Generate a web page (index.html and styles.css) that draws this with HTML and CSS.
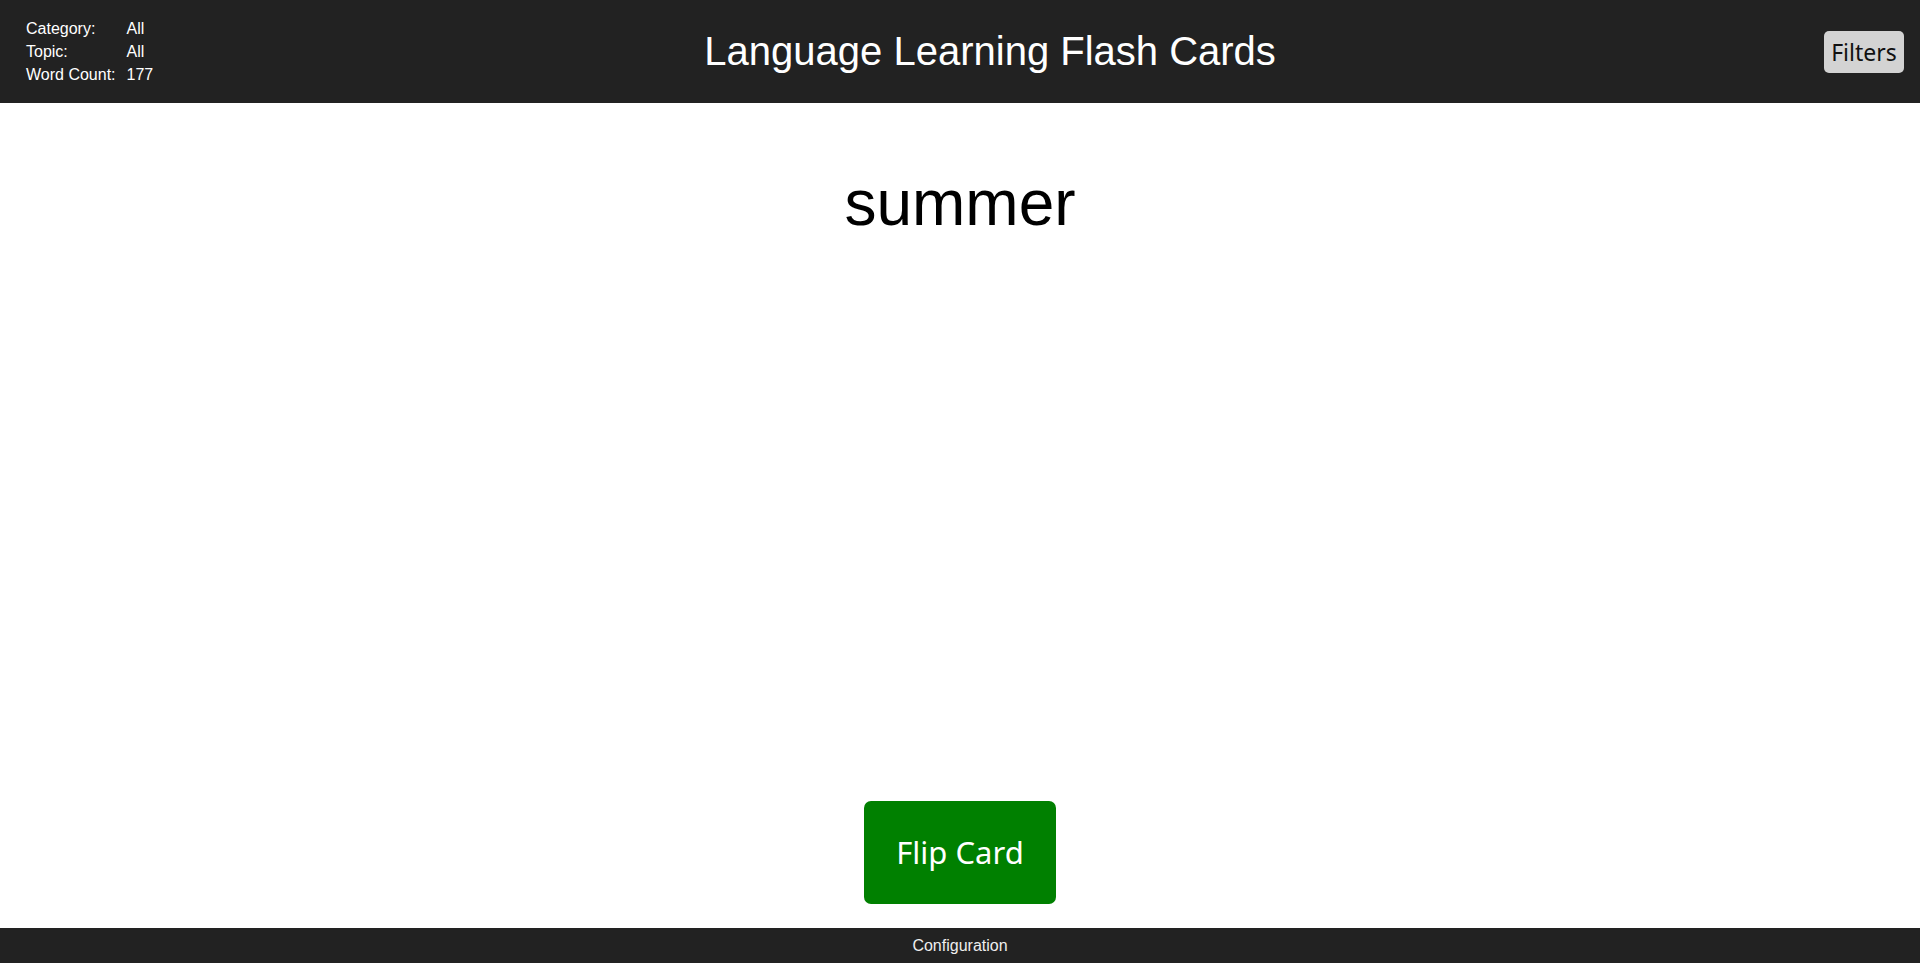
FILE: index.html
```html
<!DOCTYPE html>
<html lang="en">
<head>
<meta charset="utf-8">
<title>Language Learning Flash Cards</title>
<link rel="stylesheet" href="styles.css">
</head>
<body>
<header class="topbar">
  <table class="stats">
    <tr><td class="label">Category:</td><td class="value">All</td></tr>
    <tr><td class="label">Topic:</td><td class="value">All</td></tr>
    <tr><td class="label">Word Count:</td><td class="value">177</td></tr>
  </table>
  <h1 class="title">Language Learning Flash Cards</h1>
  <button class="filters-btn">Filters</button>
</header>
<main class="card-area">
  <div class="word">summer</div>
  <button class="flip-btn">Flip Card</button>
</main>
<footer class="footer">Configuration</footer>
</body>
</html>
```
FILE: styles.css
```css
html, body {
  margin: 0;
  padding: 0;
  height: 100%;
}
body {
  display: flex;
  flex-direction: column;
  font-family: "Liberation Sans", Arial, sans-serif;
  background: #ffffff;
  color: #000;
}
.topbar {
  height: 103px;
  flex: 0 0 103px;
  background: #222222;
  color: #ffffff;
  display: flex;
  align-items: center;
  justify-content: space-between;
  padding: 0 16px 0 23px;
}
.stats {
  border-spacing: 2px;
  font-size: 16px;
  line-height: 1.2;
  color: #ffffff;
}
.stats td {
  padding: 1px;
}
.stats td.label {
  padding-right: 8px;
}
.title {
  margin: 0;
  font-size: 40px;
  font-weight: normal;
  line-height: normal;
}
.filters-btn {
  width: 80px;
  padding: 7px 0;
  border: none;
  border-radius: 5px;
  background: #d3d3d3;
  color: #111;
  font-family: "Noto Sans", sans-serif;
  font-size: 23px;
  line-height: 28px;
  cursor: pointer;
}
.card-area {
  flex: 1;
  display: flex;
  flex-direction: column;
  align-items: center;
  justify-content: space-between;
  padding: 63px 0 24px;
}
.word {
  font-size: 64px;
  line-height: normal;
}
.flip-btn {
  width: 192px;
  padding: 31px 0;
  border: none;
  border-radius: 7px;
  background: #008000;
  color: #ffffff;
  font-family: "Noto Sans", sans-serif;
  font-size: 31px;
  line-height: 41px;
  cursor: pointer;
}
.footer {
  flex: 0 0 35px;
  height: 35px;
  background: #222222;
  color: #eeeeee;
  display: flex;
  align-items: center;
  justify-content: center;
  font-size: 16px;
}
```
